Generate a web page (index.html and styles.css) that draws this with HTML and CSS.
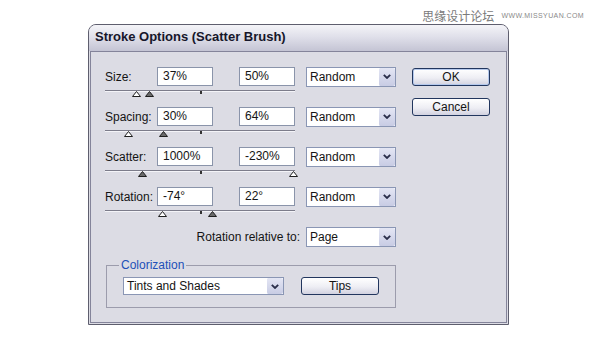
FILE: index.html
```html
<html>

<head>
  <title>Stroke Options</title>
  <link rel="stylesheet" href="styles.css">
</head>

<body>
  <div class="page">
    <div class="watermark">
      <span class="wm-cn">思缘设计论坛</span>
      <span class="wm-en">WWW.MISSYUAN.COM</span>
    </div>

    <div class="dialog">
      <div class="titlebar">Stroke Options (Scatter Brush)</div>
      <div class="body">
        <div class="main">
          <div class="param">
            <div class="row">
              <span class="label">Size:</span>
              <div class="field">37%</div>
              <div class="field second">50%</div>
              <div class="select">
                <span class="value">Random</span>
                <span class="arrow"><svg width="8" height="5" viewBox="0 0 8 5"><polyline points="0.8,0.8 4,4 7.2,0.8"/></svg></span>
              </div>
            </div>
            <div class="slider">
              <div class="groove"></div>
              <span class="tick"></span>
              <svg class="thumb hollow" style="left: 27px" width="9" height="6" viewBox="0 0 9 6"><path d="M4.5 0.5 L8.5 5.5 L0.5 5.5 Z"/></svg>
              <svg class="thumb filled" style="left: 40px" width="9" height="6" viewBox="0 0 9 6"><path d="M4.5 0.5 L8.5 5.5 L0.5 5.5 Z"/></svg>
            </div>
          </div>

          <div class="param">
            <div class="row">
              <span class="label">Spacing:</span>
              <div class="field">30%</div>
              <div class="field second">64%</div>
              <div class="select">
                <span class="value">Random</span>
                <span class="arrow"><svg width="8" height="5" viewBox="0 0 8 5"><polyline points="0.8,0.8 4,4 7.2,0.8"/></svg></span>
              </div>
            </div>
            <div class="slider">
              <div class="groove"></div>
              <span class="tick"></span>
              <svg class="thumb hollow" style="left: 19px" width="9" height="6" viewBox="0 0 9 6"><path d="M4.5 0.5 L8.5 5.5 L0.5 5.5 Z"/></svg>
              <svg class="thumb filled" style="left: 54px" width="9" height="6" viewBox="0 0 9 6"><path d="M4.5 0.5 L8.5 5.5 L0.5 5.5 Z"/></svg>
            </div>
          </div>

          <div class="param">
            <div class="row">
              <span class="label">Scatter:</span>
              <div class="field">1000%</div>
              <div class="field second">-230%</div>
              <div class="select">
                <span class="value">Random</span>
                <span class="arrow"><svg width="8" height="5" viewBox="0 0 8 5"><polyline points="0.8,0.8 4,4 7.2,0.8"/></svg></span>
              </div>
            </div>
            <div class="slider">
              <div class="groove"></div>
              <span class="tick"></span>
              <svg class="thumb filled" style="left: 33px" width="9" height="6" viewBox="0 0 9 6"><path d="M4.5 0.5 L8.5 5.5 L0.5 5.5 Z"/></svg>
              <svg class="thumb hollow" style="left: 184px" width="9" height="6" viewBox="0 0 9 6"><path d="M4.5 0.5 L8.5 5.5 L0.5 5.5 Z"/></svg>
            </div>
          </div>

          <div class="param">
            <div class="row">
              <span class="label">Rotation:</span>
              <div class="field">-74°</div>
              <div class="field second">22°</div>
              <div class="select">
                <span class="value">Random</span>
                <span class="arrow"><svg width="8" height="5" viewBox="0 0 8 5"><polyline points="0.8,0.8 4,4 7.2,0.8"/></svg></span>
              </div>
            </div>
            <div class="slider">
              <div class="groove"></div>
              <span class="tick"></span>
              <svg class="thumb hollow" style="left: 53px" width="9" height="6" viewBox="0 0 9 6"><path d="M4.5 0.5 L8.5 5.5 L0.5 5.5 Z"/></svg>
              <svg class="thumb filled" style="left: 103px" width="9" height="6" viewBox="0 0 9 6"><path d="M4.5 0.5 L8.5 5.5 L0.5 5.5 Z"/></svg>
            </div>
          </div>

          <div class="relative-row">
            <span>Rotation relative to:</span>
            <div class="select">
              <span class="value">Page</span>
              <span class="arrow"><svg width="8" height="5" viewBox="0 0 8 5"><polyline points="0.8,0.8 4,4 7.2,0.8"/></svg></span>
            </div>
          </div>

          <fieldset class="group">
            <legend>Colorization</legend>
            <div class="group-row">
              <div class="select wide">
                <span class="value">Tints and Shades</span>
                <span class="arrow"><svg width="8" height="5" viewBox="0 0 8 5"><polyline points="0.8,0.8 4,4 7.2,0.8"/></svg></span>
              </div>
              <button class="btn">Tips</button>
            </div>
          </fieldset>
        </div>

        <div class="side">
          <button class="btn default">OK</button>
          <button class="btn">Cancel</button>
        </div>
      </div>
    </div>
  </div>
</body>

</html>
```

FILE: styles.css
```css
body {
  margin: 0;
  background: #fff;
  font-family: 'Liberation Sans', Arial, sans-serif;
  font-size: 12px;
  color: #141414;
}

.page {
  width: 600px;
  height: 350px;
}

.watermark {
  height: 24px;
  box-sizing: border-box;
  padding: 7px 16px 0 0;
  display: flex;
  justify-content: flex-end;
  align-items: center;
  gap: 7px;
  color: #7a7a7a;
}

.wm-cn {
  font-family: 'Noto Sans CJK SC', sans-serif;
  font-size: 12px;
  line-height: 14px;
}

.wm-en {
  font-size: 7px;
  letter-spacing: 0.4px;
  color: #8a8a8a;
}

.dialog {
  margin-left: 88px;
  width: 421px;
  height: 301px;
  box-sizing: border-box;
  border: 1px solid #5e5e6e;
  border-radius: 8px 8px 0 0;
  background: #dcdce4;
  display: flex;
  flex-direction: column;
}

.titlebar {
  height: 26px;
  line-height: 24px;
  padding-left: 6px;
  font-size: 13px;
  font-weight: bold;
  color: #16162a;
  border-radius: 7px 7px 0 0;
  background: linear-gradient(#f4f4f8, #e0e0ea 45%, #c4c4d4);
}

.body {
  flex: 1;
  margin: 0 1px 1px;
  border: 1px solid #84849a;
  padding: 15px 14px 0 14px;
  display: flex;
  gap: 16px;
}

.main {
  width: 291px;
  display: flex;
  flex-direction: column;
}

.param {
  height: 40px;
}

.row {
  height: 19px;
  display: flex;
  align-items: center;
}

.label {
  width: 52px;
}

.field {
  width: 56px;
  height: 19px;
  box-sizing: border-box;
  border: 1px solid #8a94aa;
  background: #fff;
  padding-left: 5px;
  line-height: 17px;
}

.field.second {
  margin-left: 26px;
}

.select {
  width: 90px;
  height: 20px;
  box-sizing: border-box;
  margin-left: 11px;
  border: 1px solid #8a96b4;
  background: #fff;
  display: flex;
}

.select .value {
  flex: 1;
  padding-left: 3px;
  line-height: 18px;
}

.select .arrow {
  width: 16px;
  display: flex;
  align-items: center;
  justify-content: center;
  border-radius: 2px;
  background: linear-gradient(#e4e6f4, #c8cce4);
  border-left: 1px solid #fff;
}

.arrow polyline {
  fill: none;
  stroke: #2a2e4a;
  stroke-width: 1.8;
}

.slider {
  position: relative;
  width: 190px;
  height: 21px;
  box-sizing: border-box;
  padding-top: 4px;
}

.groove {
  height: 1px;
  background: #7c7c8a;
  border-bottom: 1px solid #f4f4f8;
}

.tick {
  position: absolute;
  left: 95px;
  top: 5px;
  width: 2px;
  height: 3px;
  background: #333;
}

.thumb {
  position: absolute;
  top: 5px;
}

.thumb path {
  stroke: #1e1e1e;
  stroke-width: 1;
}

.thumb.hollow path {
  fill: #fff;
}

.thumb.filled path {
  fill: #6a6a6a;
}

.relative-row {
  height: 20px;
  display: flex;
  justify-content: flex-end;
  align-items: center;
}

.relative-row .select {
  margin-left: 6px;
}

.group {
  margin: 11px 0 0 1px;
  width: 290px;
  box-sizing: border-box;
  border: 1px solid #9c9cac;
  padding: 5px 0 12px 16px;
}

.group legend {
  margin-left: -4px;
  padding: 0 2px;
  line-height: 14px;
  color: #2150b8;
}

.group-row {
  display: flex;
  align-items: center;
}

.select.wide {
  width: 161px;
  height: 18px;
  margin-left: 0;
}

.select.wide .value {
  line-height: 16px;
}

.btn {
  width: 78px;
  height: 18px;
  padding: 0;
  border: 1px solid #22365e;
  border-radius: 3px;
  background: linear-gradient(#ffffff, #eeeef4 55%, #d2d2e0);
  font-family: 'Liberation Sans', Arial, sans-serif;
  font-size: 12px;
  color: #141414;
}

.group-row .btn {
  margin-left: 17px;
}

.btn.default {
  box-shadow: inset 0 0 0 1px #b4c8ec;
}

.side {
  padding-top: 1px;
  display: flex;
  flex-direction: column;
  gap: 12px;
}
```
